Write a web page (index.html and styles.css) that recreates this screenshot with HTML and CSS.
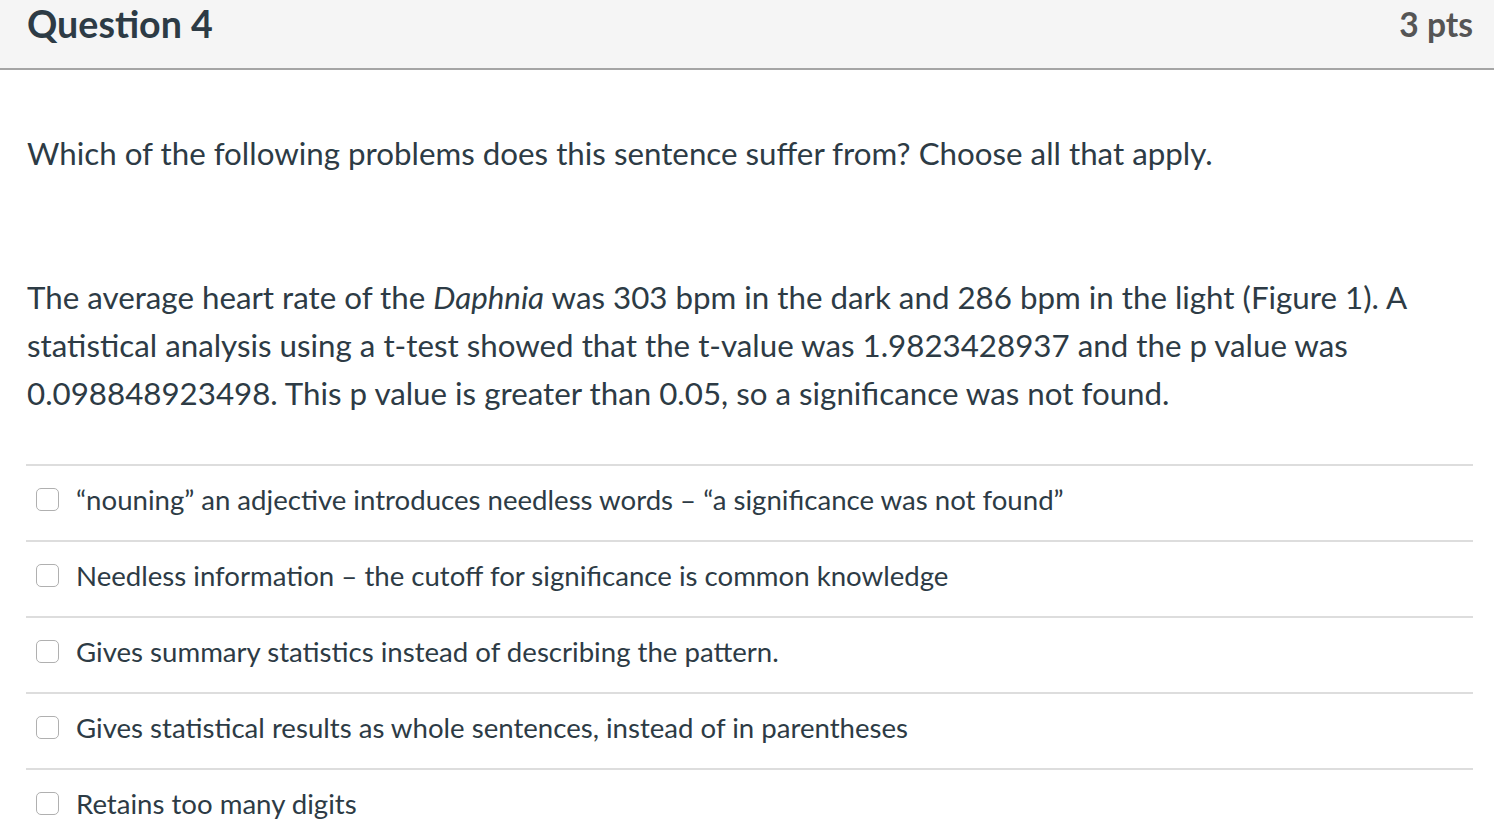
FILE: index.html
```html
<!DOCTYPE html>
<html>
<head>
<meta charset="utf-8">
<link rel="stylesheet" href="styles.css">
</head>
<body>
<div class="question">
  <div class="header">
    <h2 class="title">Question 4</h2>
    <span class="pts">3 pts</span>
  </div>
  <div class="content">
    <p class="text lead">Which of the following problems does this sentence suffer from? Choose all that apply.</p>
    <p class="text passage">The average heart rate of the <em>Daphnia</em> was 303 bpm in the dark and 286 bpm in the light (Figure 1). A statistical analysis using a t-test showed that the t-value was 1.9823428937 and the p value was 0.098848923498. This p value is greater than 0.05, so a significance was not found.</p>
    <div class="answers">
      <label class="answer"><span class="box"></span><span class="label">“nouning” an adjective introduces needless words – “a significance was not found”</span></label>
      <label class="answer"><span class="box"></span><span class="label">Needless information – the cutoff for significance is common knowledge</span></label>
      <label class="answer"><span class="box"></span><span class="label">Gives summary statistics instead of describing the pattern.</span></label>
      <label class="answer"><span class="box"></span><span class="label">Gives statistical results as whole sentences, instead of in parentheses</span></label>
      <label class="answer"><span class="box"></span><span class="label">Retains too many digits</span></label>
    </div>
  </div>
</div>
</body>
</html>
```
FILE: styles.css
```css
html, body {
  margin: 0;
  padding: 0;
  background: #fff;
}
body {
  font-family: Lato, "Open Sans", "Liberation Sans", sans-serif;
  color: #2d3b45;
}
.header {
  display: flex;
  align-items: flex-start;
  justify-content: space-between;
  height: 68px;
  padding: 0 21px 0 27px;
  background: #f5f5f5;
  border-bottom: 2px solid #a5a5a5;
}
.title {
  margin: 0;
  font-size: 37.6px;
  line-height: 48px;
  font-weight: 700;
  color: #2d3b45;
}
.pts {
  font-size: 33.6px;
  line-height: 48px;
  font-weight: 700;
  color: #555;
}
.content {
  padding: 59px 21px 0 27px;
}
.text {
  margin: 0;
  font-size: 31.3px;
  line-height: 48px;
}
.lead {
  margin-bottom: 96px;
}
.passage {
  margin-bottom: 47px;
}
.answers {
  display: flex;
  flex-direction: column;
  margin-left: -1px;
}
.answer {
  display: flex;
  align-items: center;
  gap: 17px;
  height: 66px;
  border-top: 2px solid #dddddd;
  padding-left: 10px;
  padding-bottom: 8px;
}
.box {
  width: 21px;
  height: 21px;
  border: 1px solid #b0b0b0;
  border-radius: 5px;
  background: #fff;
  flex: none;
}
.label {
  font-size: 27.6px;
  color: #2d3b45;
}
```
